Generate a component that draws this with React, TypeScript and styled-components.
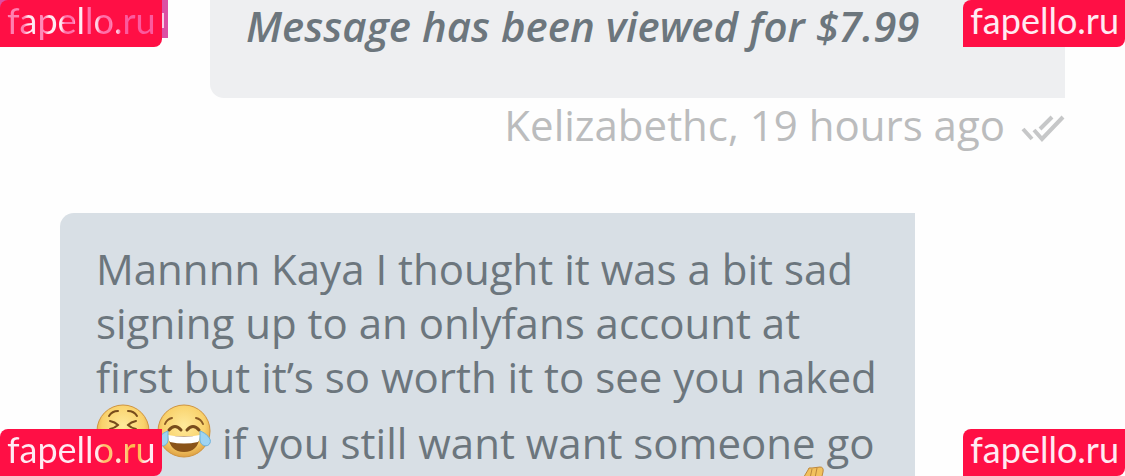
import React from 'react';
import styled, { createGlobalStyle } from 'styled-components';

const GlobalStyle = createGlobalStyle`
  * { box-sizing: border-box; }
  body { margin: 0; background: #fefefe; font-family: 'Open Sans', 'Noto Sans', sans-serif; }
`;

const Page = styled.main`
  position: relative;
  height: 100vh;
  overflow: hidden;
`;

const Thread = styled.div`
  display: flex;
  flex-direction: column;
`;

const Bubble = styled.section<{ $sent?: boolean }>`
  margin: ${p => (p.$sent ? '0 60px 0 210px' : '61px 210px 0 60px')};
  padding: ${p => (p.$sent ? '0 36px 46px' : '29px 36px')};
  border-radius: ${p => (p.$sent ? '0 0 0 14px' : '14px 0 0 0')};
  background: ${p => (p.$sent ? '#eeeff1' : '#d8dfe5')};
  color: #6c767d;
`;

const Text = styled.p<{ $strong?: boolean }>`
  margin: 0;
  font-size: 42px;
  line-height: ${p => (p.$strong ? 52 : 54)}px;
  font-weight: ${p => (p.$strong ? 600 : 400)};
  font-style: ${p => (p.$strong ? 'italic' : 'normal')};
`;

const Meta = styled.div`
  display: flex;
  align-items: center;
  justify-content: flex-end;
  gap: 16px;
  margin-right: 60px;
  color: #bbbcbd;
  font-size: 42px;
  line-height: 54px;
`;

const ReadTicks = styled.svg`
  width: 44px;
  height: 28px;
  margin-top: 8px;
  fill: none;
  stroke: #c6c7c8;
  stroke-width: 4;
`;

const Emojis = styled.span<{ $end?: boolean }>`
  display: ${p => (p.$end ? 'flex' : 'inline-flex')};
  justify-content: flex-end;
  gap: 7px;
  margin: ${p => (p.$end ? '-4px 46px 0 0' : '0')};
  vertical-align: 1px;
`;

const Emoji = styled.svg`
  width: 54px;
  height: 54px;
  flex: none;
`;

const Badge = styled.a<{ $side: 'left' | 'right'; $edge: 'top' | 'bottom' }>`
  position: absolute;
  ${p => p.$side}: 0;
  ${p => p.$edge}: 0;
  padding: 0 6px 7px 7px;
  border-radius: 8px 0;
  background: #ff0f45;
  color: #ffeaf2;
  font-family: Lato, sans-serif;
  font-size: 36px;
  line-height: 40px;
  text-decoration: none;
`;

const Tinted = styled.span<{ $tint: string }>`
  background: ${p => p.$tint};
  background-clip: text;
  -webkit-background-clip: text;
  color: transparent;
`;

const BadgeShadow = styled.div`
  position: absolute;
  top: 0;
  left: 0;
  width: 168px;
  height: 38px;
  background: linear-gradient(#f7cbe4, #f7cbe4) 162px 13px / 2px 15px no-repeat, #dc4fa3;
`;

const pinkTint =
  'linear-gradient(90deg, #ff7fb0 0 17px, #ffeaf2 21px 27px, #ff8ab8 31px 38px, #ffeaf2 42px 54px, #ff6fa8 58px 66px, #ffeaf2 70px 76px, #ff6fa8 79px 84px, #ffd5e6 87px 90px, #ff6fa8 94px 104px, #ffd5e6 107px 110px, #fb5a9e 114px)';
const goldTint =
  'linear-gradient(90deg, #ffeaf2 0 90px, #ffc06a 97px 103px, #ffe0d0 110px 116px, #ffb950 121px 132px, #ffeaf2 138px)';

const Face = () => <circle cx="27" cy="27" r="26" fill="url(#skin)" stroke="#cf9440" />;

export default function App() {
  return (
    <Page>
      <GlobalStyle />
      <Thread>
        <Bubble $sent>
          <Text $strong>Message has been viewed for $7.99</Text>
        </Bubble>
        <Meta>
          <span>Kelizabethc, 19 hours ago</span>
          <ReadTicks viewBox="0 0 44 28" aria-label="Read">
            <path d="M2 14 11 24M13 15 21 24 42 2M19 14 31 2" />
          </ReadTicks>
        </Meta>
        <Bubble>
          <Text>
            Mannnn Kaya I thought it was a bit sad<br />
            signing up to an onlyfans account at<br />
            first but it’s so worth it to see you naked<br />
            <Emojis>
              <Emoji viewBox="0 0 54 54" aria-label="persevering face">
                <defs>
                  <radialGradient id="skin" cx="50%" cy="40%" r="62%">
                    <stop offset="0" stopColor="#ffea9c" />
                    <stop offset="0.65" stopColor="#f9d26c" />
                    <stop offset="1" stopColor="#dc9c40" />
                  </radialGradient>
                </defs>
                <Face />
                <path
                  d="M13 12q3-5 9-5M41 12q-3-5-9-5M14 17q5 1 8 4-3 3-8 4M40 17q-5 1-8 4 3 3 8 4"
                  fill="none" stroke="#774c1c" strokeWidth="2" strokeLinecap="round"
                />
                <path d="M17 40q10-10 20 0z" fill="#774c1c" />
              </Emoji>
              <Emoji viewBox="0 0 54 54" aria-label="face with tears of joy">
                <Face />
                <path d="M8 20q2-5 7-6M46 20q-2-5-7-6" fill="none" stroke="#8a5a24" strokeWidth="2" strokeLinecap="round" />
                <path d="M12 26q6-7 12 0M42 26q-6-7-12 0" fill="none" stroke="#774c1c" strokeWidth="3" strokeLinecap="round" />
                <path d="M11 32H43Q41 48 27 48T11 32z" fill="#8a5318" />
                <path d="M11 31q16 3 32 0 0 5-2 7-14 3-28 0-2-2-2-7z" fill="#fff" />
                <path d="M11 27C5 29-1 35 1 39c2 5 10 3 10-3zM43 27c6 2 12 8 10 12-2 5-10 3-10-3z" fill="#9fd4f2" stroke="#6db2dc" />
              </Emoji>
            </Emojis>
            {' '}if you still want want someone go
            <Emojis $end>
              <Emoji viewBox="0 0 54 54" aria-label="raised hand">
                <path d="M29 4q0-3 4-2l8-1q4 0 3 5l-5 21-9 18-18-6 8-20z" fill="#f2c15d" stroke="#bd873c" />
                <path d="M33 3l-3 14M38 2l-3 15" fill="none" stroke="#bd873c" />
              </Emoji>
            </Emojis>
          </Text>
        </Bubble>
      </Thread>
      <BadgeShadow />
      <Badge href="#" $side="left" $edge="top"><Tinted $tint={pinkTint}>fapello.ru</Tinted></Badge>
      <Badge href="#" $side="right" $edge="top">fapello.ru</Badge>
      <Badge href="#" $side="left" $edge="bottom"><Tinted $tint={goldTint}>fapello.ru</Tinted></Badge>
      <Badge href="#" $side="right" $edge="bottom">fapello.ru</Badge>
    </Page>
  );
}
